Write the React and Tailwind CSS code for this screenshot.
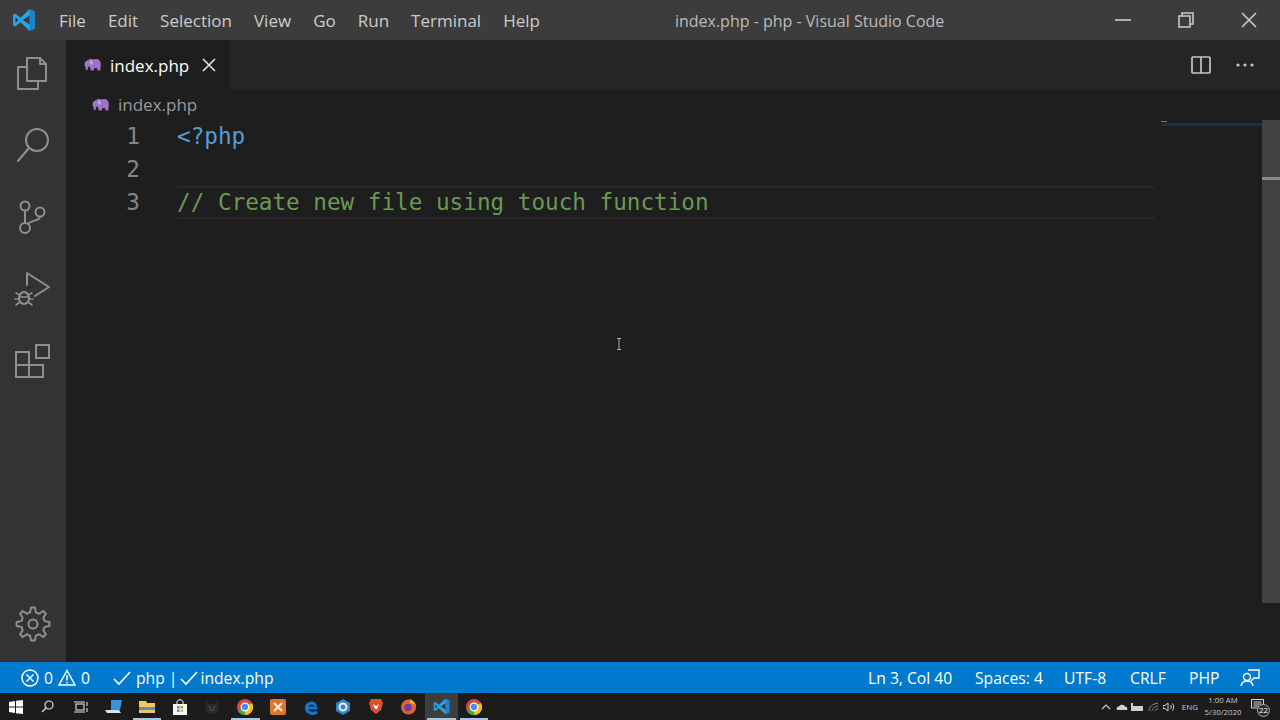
import React from "react";

const ui = { fontFamily: '"Open Sans","Noto Sans",sans-serif' };

function Elephant({ className = "" }) {
  return (
    <svg viewBox="0 0 18 15" width="18" height="15" className={className}>
      <path d="M5 1.500C6.500.5 8 .8 9 1.500c2-.8 5.500-.8 7 1.500 1 1.600 1 3.500 .6 6-.2 1-.3 2.500-.3 3.500h-2.800l-.4-2.500c-1 .4-2 .4-3 .1l-.3 2.400H6.600L6.200 9.500C5.500 9 5 8.600 4.800 8.300 4.200 9 3.800 10 3.800 11c0 .8-.2 1.200-1 1.200-.9-.1-1.300-.7-1.200-1.600.1-.5.300-.7.400-.9C1 9.500.5 8 .5 6c0-2.300 2.500-3.800 4.500-4.500z" fill="#a074c4" />
      <path d="M6 3c1.500-.6 2.800 0 2.800 1.400 0 1.300-1 2.300-2.300 2.300C6.200 5.500 6 4.200 6 3z" fill="#c9a9e2" />
    </svg>
  );
}

function VSCodeLogo({ size = 24 }) {
  return (
    <svg viewBox="0 0 24 24" width={size} height={size}>
      <path d="M17.500 1 23 3.700v16.600L17.500 23 8.500 14.300 3.200 18.400 1 17.200V6.800l2.200-1.200 5.300 4.100z" fill="#2aa3e6" />
      <path d="M17.500 1 23 3.700v16.600L17.500 23z" fill="#1b84cc" />
      <path d="M17.500 7.500 10.800 12l6.700 4.500zM3.500 9v6l3-3z" fill="#3c3c3c" />
    </svg>
  );
}

const stroke = { fill: "none", stroke: "#8f8f8f", strokeWidth: 2, strokeLinejoin: "round", strokeLinecap: "round" };

function Gear() {
  const pts = [];
  const teeth = 8;
  for (let i = 0; i < teeth; i++) {
    const a = (i / teeth) * Math.PI * 2 - Math.PI / 2;
    const step = Math.PI / teeth;
    [[12, -0.62], [16.5, -0.3], [16.5, 0.3], [12, 0.62]].forEach(([r, k]) => {
      const t = a + k * step;
      pts.push(`${(20 + r * Math.cos(t)).toFixed(2)},${(20 + r * Math.sin(t)).toFixed(2)}`);
    });
  }
  return (
    <svg viewBox="0 0 40 40" width="40" height="40" {...stroke}>
      <polygon points={pts.join(" ")} />
      <circle cx="20" cy="20" r="4.500" />
    </svg>
  );
}

function ActivityBar() {
  return (
    <div className="w-[66px] shrink-0 bg-[#333333] flex flex-col items-center pt-[12px] pb-[18px]">
      <div className="flex flex-col gap-[32px]">
        <svg viewBox="0 0 40 40" width="40" height="40" {...stroke}>
          <path d="M14 6H27L33 12V29H14Z" />
          <path d="M27 6V12H33" />
          <path d="M14 15H5V37H25V29" />
        </svg>
        <svg viewBox="0 0 40 40" width="40" height="40" {...stroke}>
          <circle cx="24" cy="16" r="11" />
          <path d="M5 37 16 24" />
        </svg>
        <svg viewBox="0 0 40 40" width="40" height="40" {...stroke}>
          <circle cx="12" cy="10" r="4.500" />
          <circle cx="27" cy="16" r="4.500" />
          <circle cx="12" cy="32" r="5" />
          <path d="M12 15V27" />
          <path d="M27 21C27 25 18 24 15 28" />
        </svg>
        <svg viewBox="0 0 40 40" width="40" height="40" {...stroke}>
          <path d="M14 17V5L36 19 22 28" />
          <ellipse cx="11" cy="30" rx="5" ry="6" />
          <path d="M3 25 7 27M19 25 15 27M2 31H6M20 31H16M3 37 7 34M19 37 15 34M6 29H16" strokeWidth="1.600" />
        </svg>
        <svg viewBox="0 0 40 40" width="40" height="40" {...stroke} strokeLinecap="butt" strokeLinejoin="miter">
          <rect x="23" y="5" width="13" height="13" />
          <path d="M3 12H16V25H30V37H3ZM3 25H16V37" />
        </svg>
      </div>
      <div className="mt-auto">
        <Gear />
      </div>
    </div>
  );
}

function TitleBar() {
  const menu = ["File", "Edit", "Selection", "View", "Go", "Run", "Terminal", "Help"];
  return (
    <div className="h-[40px] shrink-0 bg-[#3c3c3c] flex items-center text-[#cccccc] text-[17px]">
      <div className="w-[47px] pl-[12px] flex items-center">
        <VSCodeLogo size={24} />
      </div>
      <div className="flex gap-[22px] ml-[12px] pt-[1px]">
        {menu.map((m) => (
          <span key={m}>{m}</span>
        ))}
      </div>
      <span className="ml-[135px] pt-[1px] text-[16px] text-[#bbbbbb]">index.php - php - Visual Studio Code</span>
      <div className="ml-auto flex items-center">
        <div className="w-[63px] flex justify-center">
          <svg width="16" height="16" viewBox="0 0 16 16"><path d="M0 8H16" stroke="#cccccc" strokeWidth="1.600" /></svg>
        </div>
        <div className="w-[63px] flex justify-center">
          <svg width="16" height="16" viewBox="0 0 16 16" fill="none" stroke="#cccccc" strokeWidth="1.500"><path d="M1 4H12V15H1Z" /><path d="M4 4V1H15V12H12" /></svg>
        </div>
        <div className="w-[63px] flex justify-center">
          <svg width="16" height="16" viewBox="0 0 16 16" fill="none" stroke="#cccccc" strokeWidth="1.600"><path d="M1 1 15 15M15 1 1 15" /></svg>
        </div>
      </div>
    </div>
  );
}

function TabBar() {
  return (
    <div className="h-[50px] shrink-0 bg-[#252526] flex items-center">
      <div className="w-[164px] h-full bg-[#1e1e1e] flex items-center pl-[18px] text-[17px] text-white">
        <Elephant />
        <span className="ml-[8px] pt-[1px]">index.php</span>
        <svg width="14" height="14" viewBox="0 0 14 14" className="ml-[13px]" fill="none" stroke="#e4e4e4" strokeWidth="1.600"><path d="M1 1 13 13M13 1 1 13" /></svg>
      </div>
      <div className="ml-auto flex items-center pr-[26px]">
        <svg width="20" height="18" viewBox="0 0 20 18" fill="none" stroke="#c5c5c5" strokeWidth="1.700"><rect x="1" y="1" width="18" height="16" rx="1" /><path d="M10 1V17" /></svg>
        <svg width="18" height="4" viewBox="0 0 18 4" className="ml-[25px]" fill="#c5c5c5"><circle cx="2" cy="2" r="1.600" /><circle cx="9" cy="2" r="1.600" /><circle cx="16" cy="2" r="1.600" /></svg>
      </div>
    </div>
  );
}

function Editor() {
  const mono = { fontFamily: '"DejaVu Sans Mono",monospace' };
  const rows = [
    { n: 1, t: "<?php", c: "text-[#569cd6]" },
    { n: 2, t: "", c: "" },
    { n: 3, t: "// Create new file using touch function", c: "text-[#6a9955]" },
  ];
  return (
    <div className="flex-1 min-h-0 relative bg-[#1e1e1e]">
      <div className="flex flex-col text-[22.650px]" style={mono}>
        {rows.map((r) => (
          <div key={r.n} className="h-[33px] flex items-center">
            <span className="w-[74px] text-right text-[#858585]">{r.n}</span>
            <div className={`ml-[37px] w-[978px] h-[33px] flex items-center ${r.n === 3 ? "border-y-2 border-[#282828]" : ""}`}>
              <span className={r.c}>{r.t}</span>
            </div>
          </div>
        ))}
      </div>
      <div className="absolute left-[1095px] top-0 w-[101px] h-[8px] flex flex-col gap-[1px] pt-[1px]">
        <div className="h-[1px] w-[6px] bg-[#5e7e96]" />
        <div className="h-[3px] w-full bg-[#22303c]" />
      </div>
      <div className="absolute right-0 top-0 w-[18px] h-[483px] bg-[#424242]">
        <div className="absolute left-0 right-0 top-[57px] h-[3px] bg-[#8a8a8a]" />
      </div>
      <svg width="6" height="12" viewBox="0 0 6 12" className="absolute left-[550px] top-[218px]" fill="none" stroke="#aaaaaa" strokeWidth="1">
        <path d="M1 .5H5M1 11.500H5M3 .5V11.500" />
      </svg>
    </div>
  );
}

function StatusBar() {
  const right = [
    ["Ln 3, Col 40", "w-[85px]"],
    ["Spaces: 4", "w-[67px]"],
    ["UTF-8", "w-[44px]"],
    ["CRLF", "w-[37px]"],
    ["PHP", "w-[30px]"],
  ];
  const check = (
    <svg width="18" height="16" viewBox="0 0 18 16" fill="none" stroke="#ffffff" strokeWidth="1.600"><path d="M1 9 6 14 17 2" /></svg>
  );
  return (
    <div className="h-[31px] shrink-0 bg-[#007acc] flex items-center text-[15.700px] text-white">
      <svg width="18" height="18" viewBox="0 0 18 18" className="ml-[21px]" fill="none" stroke="#ffffff" strokeWidth="1.500"><circle cx="9" cy="9" r="8" /><path d="M5.500 5.500 12.500 12.500M12.500 5.500 5.500 12.500" /></svg>
      <span className="ml-[5px] pt-[3px]">0</span>
      <svg width="18" height="17" viewBox="0 0 18 17" className="ml-[5px]" fill="none" stroke="#ffffff" strokeWidth="1.500"><path d="M9 1.500 17 16H1Z" /><path d="M9 6V11.500M9 13V14.500" /></svg>
      <span className="ml-[5px] pt-[3px]">0</span>
      <span className="ml-[23px] flex items-center">{check}</span>
      <span className="ml-[5px] pt-[3px]">php</span>
      <span className="ml-[4px] pt-[3px]">|</span>
      <span className="ml-[3px] flex items-center">{check}</span>
      <span className="ml-[2px] pt-[3px]">index.php</span>
      <div className="ml-auto flex items-center gap-[22px] pr-[21px] pt-[3px]">
        {right.map(([t, w]) => (
          <span key={t} className={`${w} whitespace-nowrap`}>{t}</span>
        ))}
      </div>
      <svg width="20" height="20" viewBox="0 0 20 20" className="mr-[20px]" fill="none" stroke="#ffffff" strokeWidth="1.400"><path d="M8 2H19V10H14L11 13" /><circle cx="7" cy="9" r="3.500" /><path d="M1 18C1.500 14.500 4 13 7 13s5.500 1.500 6 5" /></svg>
    </div>
  );
}

const T = ({ children, active, under }) => (
  <div className={`w-[32.700px] h-full relative flex items-center justify-center shrink-0 ${active ? "bg-[#3d3d3d]" : ""}`}>
    {children}
    {under && <div className="absolute left-[2px] right-[2px] bottom-0 h-[2px] bg-[#a6c8e8]" />}
  </div>
);

const Chrome = () => (
  <svg width="16" height="16" viewBox="0 0 16 16">
    <circle cx="8" cy="8" r="8" fill="#d8483b" />
    <path d="M8 8 1 12A8 8 0 0 0 8 16Z" fill="#3aa757" />
    <path d="M8 8 15 4A8 8 0 0 1 8 16Z" fill="#f4c20d" />
    <circle cx="8" cy="8" r="3.800" fill="#4a8cf0" stroke="#ffffff" strokeWidth="1.300" />
  </svg>
);

function Taskbar() {
  return (
    <div className="h-[27px] shrink-0 bg-[#1c1c1c] flex items-center text-[#c8c8c8]">
      <T>
        <svg width="14" height="14" viewBox="0 0 14 14" fill="#ffffff"><path d="M0 2 6 1V6.500H0ZM7 .8 14 0V6.500H7ZM0 7.500H6V13L0 12ZM7 7.500H14V14L7 13.200Z" /></svg>
      </T>
      <T>
        <svg width="13" height="13" viewBox="0 0 13 13" fill="none" stroke="#e0e0e0" strokeWidth="1.200" className="-ml-[4px]"><circle cx="8" cy="5" r="4" /><path d="M5 8 1 12" /></svg>
      </T>
      <T>
        <svg width="14" height="12" viewBox="0 0 14 12" fill="none" stroke="#e0e0e0" strokeWidth="1.100" className="-ml-[2px]"><rect x="2" y="3" width="8" height="6" /><path d="M0 1H11M0 11H11M13 1V5M13 7V11" /></svg>
      </T>
      <T>
        <svg width="18" height="16" viewBox="0 0 18 16"><path d="M6 1H17L15 11H6Z" fill="#3e8fd8" /><path d="M0 11H14L16 14H2Z" fill="#d8e4ee" /></svg>
      </T>
      <T under>
        <svg width="16" height="14" viewBox="0 0 16 14"><path d="M0 1H7L8 3H16V13H0Z" fill="#f0c95c" /><path d="M0 7H16V10H0Z" fill="#3f97cf" /></svg>
      </T>
      <T>
        <svg width="16" height="16" viewBox="0 0 16 16"><path d="M1 5H15V16H1Z" fill="#f5f5f5" /><path d="M5 5V3C5 0 11 0 11 3V5" fill="none" stroke="#f5f5f5" /><path d="M5 7H7.500V9.500H5Z" fill="#e55" /><path d="M8.500 7H11V9.500H8.500Z" fill="#6b3" /><path d="M5 10.500H7.500V13H5Z" fill="#39e" /><path d="M8.500 10.500H11V13H8.500Z" fill="#fb0" /></svg>
      </T>
      <T>
        <svg width="16" height="16" viewBox="0 0 16 16"><path d="M2 1 5 5H11L14 1 15 10 11 15H5L1 10Z" fill="#2a2a2a" /><path d="M5 7 7.500 12M11 7 8.500 12" stroke="#6a5056" /></svg>
      </T>
      <T under><Chrome /></T>
      <T>
        <svg width="16" height="16" viewBox="0 0 16 16"><rect width="16" height="16" rx="2" fill="#d9772c" /><path d="M4 4 12 12M12 4 4 12" stroke="#ffe9d6" strokeWidth="2.200" /></svg>
      </T>
      <T>
        <svg width="16" height="16" viewBox="0 0 16 16" fill="none"><path d="M14.500 9H3.500C3.500 4 12 2 12.500 7" stroke="#1277d3" strokeWidth="3" /><path d="M3.500 8C3 14 10 16 14 13" stroke="#1277d3" strokeWidth="3" /></svg>
      </T>
      <T>
        <svg width="16" height="16" viewBox="0 0 16 16"><path d="M8 0 15 4V12L8 16 1 12V4Z" fill="#2f86c9" /><circle cx="8" cy="8" r="3.500" fill="none" stroke="#e6f1fa" strokeWidth="2" /></svg>
      </T>
      <T>
        <svg width="16" height="17" viewBox="0 0 16 17"><path d="M3 1H13L15 5 13 12 8 16 3 12 1 5Z" fill="#e0512b" /><path d="M5 6 8 8 11 6 9 11H7Z" fill="#ffffff" /></svg>
      </T>
      <T>
        <svg width="17" height="17" viewBox="0 0 17 17"><circle cx="8.500" cy="9" r="7.500" fill="#e8602c" /><circle cx="8" cy="9.500" r="3.800" fill="#6b3fa8" /><path d="M10 1C14 3 16 6 16 9 15 6 12 5 10 5Z" fill="#f9b530" /></svg>
      </T>
      <T active under>
        <VSCodeLogo size={17} />
      </T>
      <T under><Chrome /></T>
      <div className="ml-auto flex items-center h-full">
        <svg width="10" height="6" viewBox="0 0 10 6" fill="none" stroke="#d0d0d0" strokeWidth="1.100"><path d="M1 5 5 1 9 5" /></svg>
        <svg width="12" height="8" viewBox="0 0 12 8" className="ml-[5px]" fill="#d0d0d0"><path d="M1 7C0 5 1 3.500 3 3.500 4 1 8 1 9 3.500c2 0 3 2 2 3.500Z" /></svg>
        <svg width="12" height="9" viewBox="0 0 12 9" className="ml-[3px]" fill="#d0d0d0"><path d="M0 1H2V4H12V9H0Z" /></svg>
        <svg width="11" height="10" viewBox="0 0 11 10" className="ml-[5px]" fill="none" stroke="#8a8a8a" strokeWidth="1"><path d="M1 9C1 5 4 2 10 1M4 9C4 7 6 5 10 4M7 9C7 8.500 8 7 10 7" /></svg>
        <svg width="12" height="10" viewBox="0 0 12 10" className="ml-[4px]" fill="none" stroke="#d0d0d0" strokeWidth="1"><path d="M0 3.500H2L5 1V9L2 6.500H0ZM7.500 3C8.500 4.500 8.500 5.500 7.500 7M9.500 1.500C11 3.500 11 6.500 9.500 8.500" /></svg>
        <span className="ml-[7px] text-[8px]">ENG</span>
        <div className="ml-[8px] -mt-[1px] flex flex-col items-center text-[7.800px] leading-[12px] whitespace-nowrap w-[34px]">
          <span>1:00 AM</span>
          <span>5/30/2020</span>
        </div>
        <div className="relative ml-[11px] mr-[13px] w-[16px] h-[16px]">
          <svg width="13" height="12" viewBox="0 0 13 12" fill="none" stroke="#d8d8d8" strokeWidth="1"><path d="M.5.5H12.500V9H.5ZM2.500 3H10.500M2.500 5H10.500M2.500 7H8" /></svg>
          <span className="absolute -right-[3px] -bottom-[2px] w-[13px] h-[13px] rounded-full bg-[#2a2a2a] border border-[#aaaaaa] flex items-center justify-center text-[8px] leading-none text-white">22</span>
        </div>
      </div>
    </div>
  );
}

export default function App() {
  return (
    <div className="w-[1280px] h-[720px] overflow-hidden flex flex-col" style={ui}>
      <TitleBar />
      <div className="flex-1 min-h-0 flex">
        <ActivityBar />
        <div className="flex-1 min-w-0 flex flex-col bg-[#1e1e1e]">
          <TabBar />
          <div className="h-[30px] shrink-0 flex items-center pl-[26px] text-[17px] text-[#9a9a9a]">
            <Elephant />
            <span className="ml-[8px]">index.php</span>
          </div>
          <Editor />
        </div>
      </div>
      <StatusBar />
      <Taskbar />
    </div>
  );
}
